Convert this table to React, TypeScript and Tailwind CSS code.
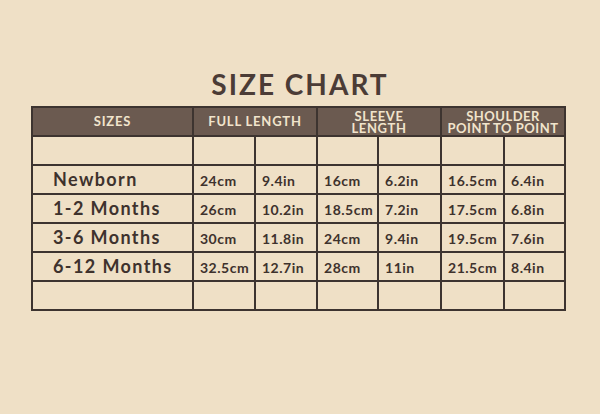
const rows = [
  ["Newborn", "24cm", "9.4in", "16cm", "6.2in", "16.5cm", "6.4in"],
  ["1-2 Months", "26cm", "10.2in", "18.5cm", "7.2in", "17.5cm", "6.8in"],
  ["3-6 Months", "30cm", "11.8in", "24cm", "9.4in", "19.5cm", "7.6in"],
  ["6-12 Months", "32.5cm", "12.7in", "28cm", "11in", "21.5cm", "8.4in"],
];

const widths = [161, 62, 62, 61, 63, 63, 61];

const cell = "border-2 border-[#3d3430] p-0";
const head =
  "border-2 border-[#3d3430] bg-[#6b5a50] p-0 text-center align-middle font-bold uppercase text-[#f1e4cc]";

const App = () => {
  return (
    <div className="h-[414px] w-[600px] overflow-hidden bg-[#efe0c6] font-['Lato',sans-serif] text-[#3e322d]">
      <h1 className="pt-[67px] text-center text-[28px] font-bold leading-[34px] tracking-[2px] text-[#4b3c36]">
        SIZE CHART
      </h1>
      <div className="pl-[31px] pt-[5px]">
        <table className="w-[535px] table-fixed border-collapse">
          <colgroup>
            {widths.map((w, i) => (
              <col key={i} style={{ width: w }} />
            ))}
          </colgroup>
          <thead>
            <tr className="h-[29px]">
              <th className={`${head} text-[13px] tracking-[0.8px]`}>Sizes</th>
              <th colSpan={2} className={`${head} text-[13px] tracking-[0.8px]`}>
                Full Length
              </th>
              <th colSpan={2} className={`${head} text-[13px] leading-[12px] tracking-[0.6px]`}>
                Sleeve
                <br />
                Length
              </th>
              <th colSpan={2} className={`${head} text-[13px] leading-[12px] tracking-[0.5px]`}>
                Shoulder
                <br />
                Point to Point
              </th>
            </tr>
          </thead>
          <tbody>
            <tr className="h-[29px]">
              {widths.map((_, i) => (
                <td key={i} className={cell} />
              ))}
            </tr>
            {rows.map((r) => (
              <tr key={r[0]} className="h-[29px]">
                <td className={`${cell} pl-[20px] text-[18px] font-bold tracking-[1.4px]`}>{r[0]}</td>
                {r.slice(1).map((v, i) => (
                  <td
                    key={i}
                    className={`${cell} whitespace-nowrap pl-[6px] pt-[2px] text-[14px] font-bold tracking-[0.5px]`}
                  >
                    {v}
                  </td>
                ))}
              </tr>
            ))}
            <tr className="h-[29px]">
              {widths.map((_, i) => (
                <td key={i} className={cell} />
              ))}
            </tr>
          </tbody>
        </table>
      </div>
    </div>
  );
};

export default App;
